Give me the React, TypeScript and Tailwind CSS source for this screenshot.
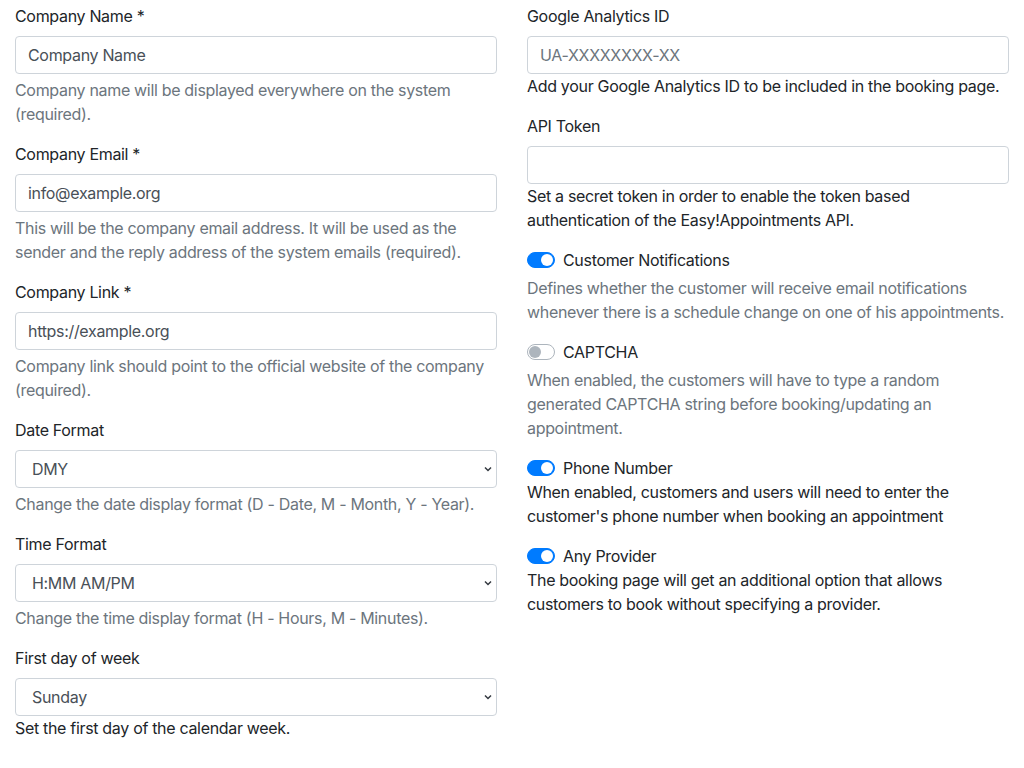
import React from 'react';

const font = { fontFamily: 'Inter, "Liberation Sans", Arial, sans-serif', letterSpacing: '-0.32px' };

function Label({ children }: { children: React.ReactNode }) {
  return <label className="mb-2 block text-base leading-6 text-[#212529]">{children}</label>;
}

function Muted({ children }: { children: React.ReactNode }) {
  return <div className="mt-1 text-base leading-6 text-[#6c757d]">{children}</div>;
}

function Plain({ children }: { children: React.ReactNode }) {
  return <div className="text-base leading-6 text-[#212529]">{children}</div>;
}

function TextInput({ value, placeholder }: { value?: string; placeholder?: string }) {
  return (
    <input
      readOnly
      defaultValue={value}
      placeholder={placeholder}
      className="block h-[38px] w-full rounded-[4px] border border-[#ced4da] bg-white px-3 text-base text-[#495057] outline-none placeholder:text-[#6c757d]"
      style={font}
    />
  );
}

function Select({ value }: { value: string }) {
  return (
    <div className="relative">
      <select
        defaultValue={value}
        className="block h-[38px] w-full appearance-none rounded-[4px] border border-[#ced4da] bg-white pl-4 pr-7 text-base text-[#495057] outline-none"
        style={font}
      >
        <option>{value}</option>
      </select>
      <svg
        className="pointer-events-none absolute right-[5px] top-[15px]"
        width="8"
        height="8"
        viewBox="0 0 8 8"
      >
        <path d="M1 2.5 L4 5.5 L7 2.5" fill="none" stroke="#343a40" strokeWidth="1.5" />
      </svg>
    </div>
  );
}

function Switch({ on, label }: { on: boolean; label: string }) {
  return (
    <div className="flex items-center gap-[8px] text-base leading-6 text-[#212529]">
      <span
        className={
          on
            ? 'relative inline-block h-4 w-7 rounded-full border border-[#007bff] bg-[#007bff]'
            : 'relative inline-block h-4 w-7 rounded-full border border-[#adb5bd] bg-white'
        }
      >
        <span
          className={
            on
              ? 'absolute left-[13px] top-[1px] h-3 w-3 rounded-full bg-white'
              : 'absolute left-[1px] top-[1px] h-3 w-3 rounded-full bg-[#adb5bd]'
          }
        />
      </span>
      <span>{label}</span>
    </div>
  );
}

export default function App() {
  return (
    <div className="min-h-screen bg-white px-[15px] pt-1" style={font}>
      <div className="grid grid-cols-2 gap-[30px]">
        <div>
          <div className="mb-4">
            <Label>Company Name *</Label>
            <TextInput value="Company Name" />
            <Muted>Company name will be displayed everywhere on the system (required).</Muted>
          </div>
          <div className="mb-4">
            <Label>Company Email *</Label>
            <TextInput value="info@example.org" />
            <Muted>
              This will be the company email address. It will be used as the sender and the reply
              address of the system emails (required).
            </Muted>
          </div>
          <div className="mb-4">
            <Label>Company Link *</Label>
            <TextInput value="https://example.org" />
            <Muted>Company link should point to the official website of the company (required).</Muted>
          </div>
          <div className="mb-4">
            <Label>Date Format</Label>
            <Select value="DMY" />
            <Muted>Change the date display format (D - Date, M - Month, Y - Year).</Muted>
          </div>
          <div className="mb-4">
            <Label>Time Format</Label>
            <Select value="H:MM AM/PM" />
            <Muted>Change the time display format (H - Hours, M - Minutes).</Muted>
          </div>
          <div className="mb-4">
            <Label>First day of week</Label>
            <Select value="Sunday" />
            <Plain>Set the first day of the calendar week.</Plain>
          </div>
        </div>

        <div>
          <div className="mb-4">
            <Label>Google Analytics ID</Label>
            <TextInput placeholder="UA-XXXXXXXX-XX" />
            <Plain>Add your Google Analytics ID to be included in the booking page.</Plain>
          </div>
          <div className="mb-4">
            <Label>API Token</Label>
            <TextInput />
            <Plain>
              Set a secret token in order to enable the token based authentication of the
              Easy!Appointments API.
            </Plain>
          </div>
          <div className="mb-4">
            <Switch on label="Customer Notifications" />
            <Muted>
              Defines whether the customer will receive email notifications whenever there is a
              schedule change on one of his appointments.
            </Muted>
          </div>
          <div className="mb-4">
            <Switch on={false} label="CAPTCHA" />
            <Muted>
              When enabled, the customers will have to type a random generated CAPTCHA string before
              booking/updating an appointment.
            </Muted>
          </div>
          <div className="mb-4">
            <Switch on label="Phone Number" />
            <Plain>
              When enabled, customers and users will need to enter the customer's phone number when
              booking an appointment
            </Plain>
          </div>
          <div className="mb-4">
            <Switch on label="Any Provider" />
            <Plain>
              The booking page will get an additional option that allows customers to book without
              specifying a provider.
            </Plain>
          </div>
        </div>
      </div>
    </div>
  );
}
